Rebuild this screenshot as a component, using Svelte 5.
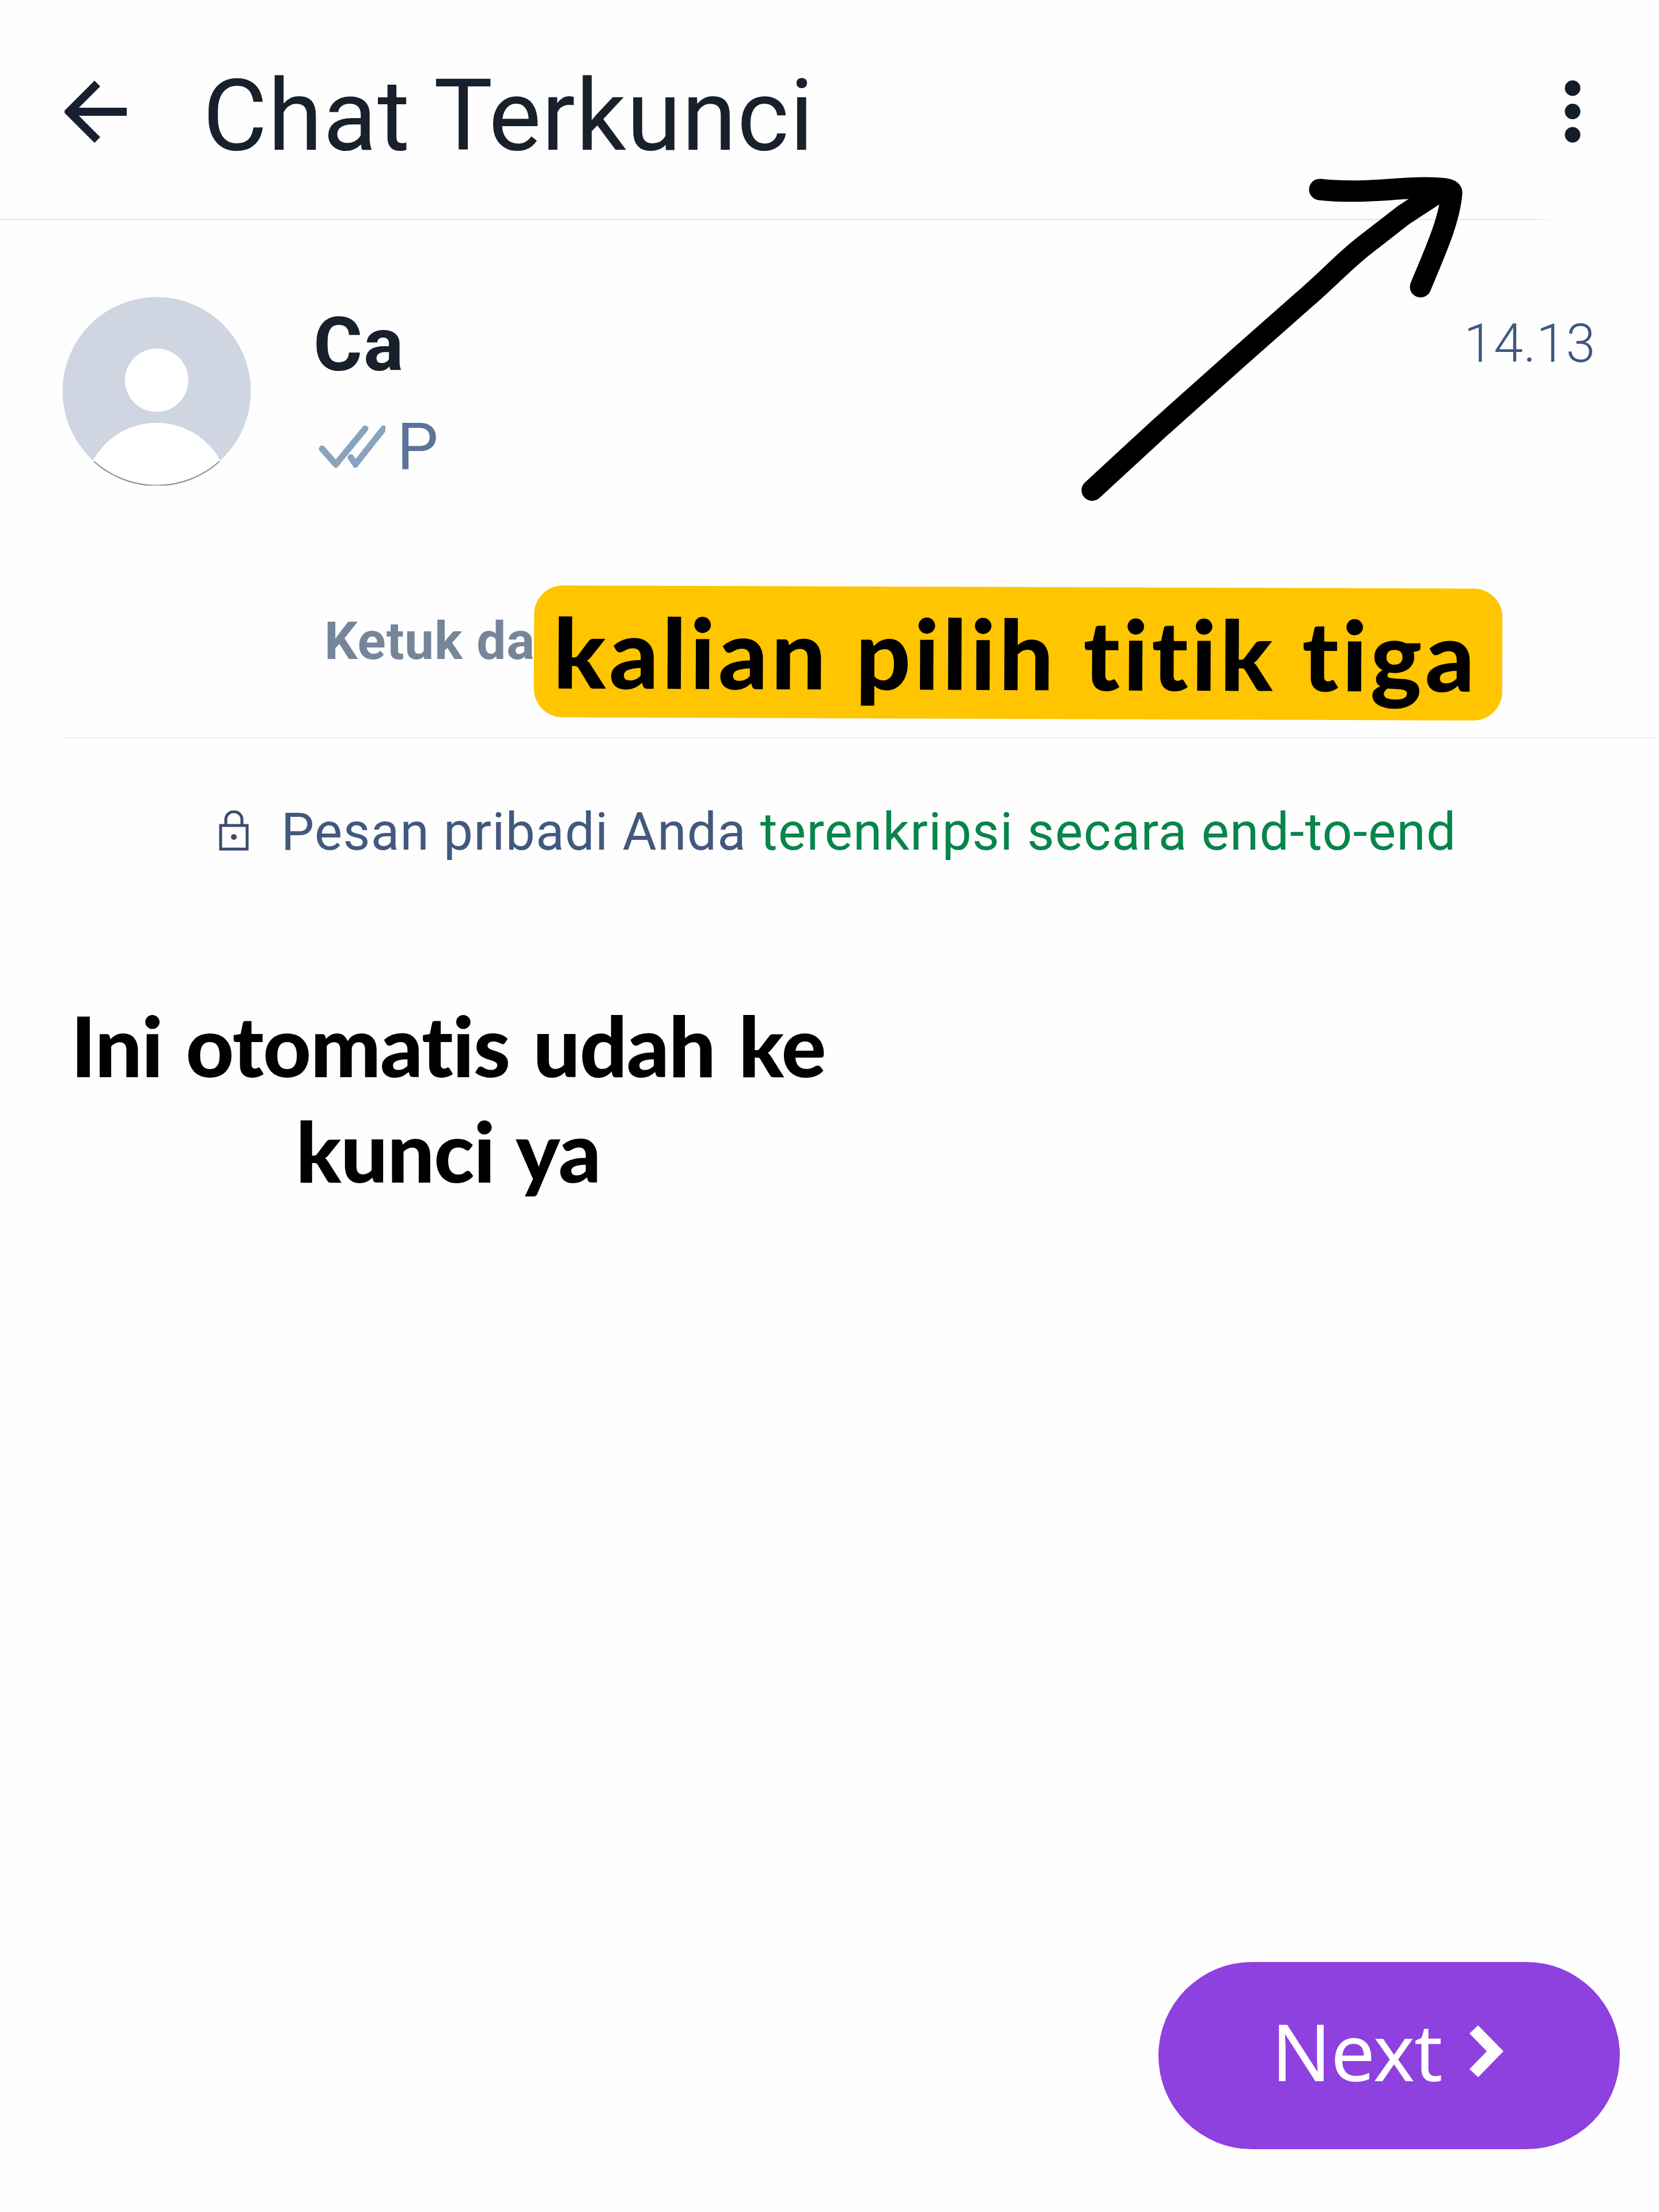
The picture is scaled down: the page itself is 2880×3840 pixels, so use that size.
<script>
	let chats = [{ name: 'Ca', message: 'P', time: '14.13' }];

	let caption = ['Ini otomatis udah ke', 'kunci ya'];
</script>

<div class="page">
	<header>
		<svg class="back" viewBox="0 0 108 108">
			<path d="M108 54H12M57 5L8 54l49 49" />
		</svg>
		<h1>Chat Terkunci</h1>
		<svg class="menu" viewBox="0 0 28 110">
			<circle cx="14" cy="14" r="13.5" />
			<circle cx="14" cy="54.5" r="13.5" />
			<circle cx="14" cy="95" r="13.5" />
		</svg>
	</header>

	<main>
		{#each chats as chat}
			<div class="chat">
				<svg class="avatar" viewBox="0 0 328 328">
					<defs>
						<clipPath id="round"><circle cx="164" cy="164" r="163" /></clipPath>
					</defs>
					<circle cx="164" cy="164" r="163.5" fill="#cfd6e1" />
					<g clip-path="url(#round)" fill="#fff">
						<circle cx="164" cy="145" r="55" />
						<ellipse cx="164" cy="345" rx="126" ry="126" />
					</g>
					<path d="M55 286a163 163 0 0 0 218 0" fill="none" stroke="#8b8da3" stroke-width="2" />
				</svg>
				<div class="info">
					<div class="name">{chat.name}</div>
					<div class="message">
						<svg class="checks" viewBox="0 0 116 74">
							<path d="M6 41l24 27L81 6M56 56l8 12 49-62" />
						</svg>
						<span>{chat.message}</span>
					</div>
				</div>
				<div class="time">{chat.time}</div>
			</div>
		{/each}

		<div class="hint">
			<span>Ketuk da</span>
			<div class="label">kalian pilih titik tiga</div>
		</div>

		<div class="notice">
			<svg class="lock" viewBox="0 0 52 70">
				<path d="M3 26h46v41H3zM12 26V16a14 14 0 0 1 28 0v10" />
				<circle cx="26" cy="46" r="5" />
			</svg>
			<p>Pesan pribadi Anda <a href="#top">terenkripsi secara end-to-end</a></p>
		</div>

		<div class="caption">
			{#each caption as line}
				<div>{line}</div>
			{/each}
		</div>
	</main>

	<button class="next">
		<span>Next</span>
		<svg viewBox="0 0 60 92">
			<path d="M0 15L15 1l44 45-44 45L0 77l30-31z" />
		</svg>
	</button>

	<!-- hand-drawn pointer over the header -->
	<svg class="pointer" viewBox="0 0 680 580">
		<path d="M36 551L152 444 292 319 411 214C450 180 475 152 510 125L577 73 646 28" />
		<path d="M431 29C515 38 580 22 640 27Q662 28 660 36C656 84 630 140 606 198" />
	</svg>
</div>

<style>
	:global(body) {
		margin: 0;
		background: #fefefe;
	}

	.page {
		position: relative;
		box-sizing: border-box;
		width: 2880px;
		height: 3840px;
		overflow: hidden;
		display: flex;
		flex-direction: column;
		background: #fefefe;
		color: #18202c;
		font-family: Roboto, sans-serif;
	}

	header {
		box-sizing: border-box;
		height: 382px;
		padding: 115px 136px 0 112px;
		display: flex;
		align-items: flex-start;
		background: linear-gradient(90deg, #e3e3e6 92%, transparent 94%) bottom / 100% 2px no-repeat;
	}

	.back {
		width: 108px;
		height: 108px;
		margin-top: 25px;
		fill: none;
		stroke: #18202e;
		stroke-width: 14;
	}

	h1 {
		margin: 0 auto 0 132px;
		font-size: 172px;
		line-height: 172px;
		font-weight: 400;
		letter-spacing: 1px;
	}

	.menu {
		width: 28px;
		height: 110px;
		margin-top: 24px;
		fill: #151d2a;
	}

	main {
		flex: 1;
	}

	.chat {
		display: flex;
		height: 596px;
		padding: 133px 110px 0 108px;
		box-sizing: border-box;
		align-items: flex-start;
	}

	.avatar {
		width: 328px;
		height: 328px;
	}

	.info {
		flex: 1;
		padding: 19px 0 0 108px;
	}

	.name {
		font-size: 130px;
		line-height: 130px;
		font-weight: 700;
		letter-spacing: 2px;
	}

	.message {
		display: flex;
		align-items: center;
		gap: 20px;
		margin-top: 55px;
		font-size: 114px;
		line-height: 114px;
		color: #5b7498;
	}

	.checks {
		width: 116px;
		height: 74px;
		margin: 0 0 2px 9px;
		fill: none;
		stroke: #8aa3bd;
		stroke-width: 11;
		stroke-linecap: round;
	}

	.time {
		padding-top: 36px;
		font-size: 92px;
		line-height: 92px;
		font-weight: 300;
		letter-spacing: 0.5px;
		color: #3d5881;
	}

	.hint {
		display: flex;
		height: 304px;
		margin-left: 108px;
		padding: 41px 0 0 455px;
		box-sizing: border-box;
		border-bottom: 2px solid #efeff1;
	}

	.hint span {
		width: 364px;
		padding-top: 49px;
		font-size: 91px;
		line-height: 91px;
		font-weight: 700;
		letter-spacing: 0.9px;
		white-space: nowrap;
		color: #75859a;
	}

	.label {
		box-sizing: border-box;
		width: 1681px;
		height: 229px;
		padding-right: 9px;
		border-radius: 50px;
		background: #ffc500;
		color: #000;
		font: 900 168px/229px Lato, sans-serif;
		letter-spacing: 5.7px;
		text-align: center;
		white-space: nowrap;
		transform: rotate(0.2deg);
	}

	.notice {
		display: flex;
		padding: 117px 0 0 380px;
	}

	.lock {
		width: 52px;
		height: 70px;
		margin: 8px 56px 0 0;
		fill: none;
		stroke: #3c4b6e;
		stroke-width: 5;
	}

	.lock circle {
		fill: #3c4b6e;
		stroke: none;
	}

	.notice p {
		margin: 0;
		font-size: 91px;
		line-height: 91px;
		letter-spacing: 1.25px;
		white-space: nowrap;
		color: #42587e;
	}

	.notice a {
		color: #07854a;
		text-decoration: none;
	}

	.caption {
		width: 1556px;
		margin-top: 233px;
		color: #000;
		font: 900 145px/183px Lato, sans-serif;
		letter-spacing: -1.2px;
		word-spacing: 7px;
		text-align: center;
		white-space: nowrap;
	}

	.next {
		align-self: flex-end;
		display: flex;
		align-items: center;
		box-sizing: border-box;
		width: 801px;
		height: 325px;
		margin: 0 68px 109px 0;
		padding: 0 0 0 196px;
		border: none;
		border-radius: 163px;
		background: #8e41df;
		color: #fff;
		font: 400 137px/137px "Noto Sans", sans-serif;
		letter-spacing: -1px;
	}

	.next span {
		margin-bottom: 17px;
	}

	.next svg {
		width: 60px;
		height: 92px;
		margin: 0 0 16px 47px;
		fill: #fff;
	}

	.pointer {
		position: absolute;
		left: 1860px;
		top: 300px;
		width: 680px;
		height: 580px;
		fill: none;
		stroke: #000;
		stroke-width: 37;
		stroke-linecap: round;
		stroke-linejoin: round;
	}
</style>
